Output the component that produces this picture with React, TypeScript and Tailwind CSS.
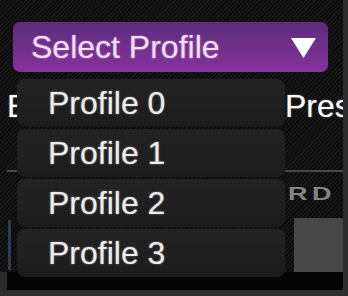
import React from "react";

const hatch =
  "bg-[repeating-linear-gradient(135deg,#181818_0px,#181818_1.5px,#0b0b0b_1.5px,#0b0b0b_3px)]";

export default function App() {
  const items = ["Profile 0", "Profile 1", "Profile 2", "Profile 3"];
  return (
    <div
      className="w-[348px] h-[296px] bg-[#2e2e2e] overflow-hidden"
      style={{ fontFamily: '"Liberation Sans", Arial, sans-serif' }}
    >
      <div
        className={`relative w-[343px] h-[290px] overflow-hidden flex flex-col ${hatch}`}
      >
        {/* header */}
        <div className="pt-[22px] pl-[13px] h-[72px] shrink-0">
          <div className="w-[315px] h-[50px] rounded-[7px] bg-linear-to-b from-[#5c2b7c] to-[#85339c] flex items-center justify-between pl-[18px] pr-[12px]">
            <span className="text-[32px] leading-[32px] text-[#f4def7] whitespace-nowrap [text-shadow:0_0_2px_rgba(255,220,255,0.5)]">
              Select Profile
            </span>
            <svg width="25" height="20" viewBox="0 0 25 20" className="mt-[2px]">
              <polygon points="0,0 25,0 12.5,20" fill="#ffffff" />
            </svg>
          </div>
        </div>

        {/* content area */}
        <div className="flex h-[200px] shrink-0">
          {/* left column */}
          <div className="w-[17px] shrink-0 flex flex-col overflow-hidden">
            <div className="mt-[18px] pl-[7px] text-[32px] leading-[32px] text-white whitespace-nowrap [text-shadow:0_0_2px_rgba(255,255,255,0.4)]">
              Bank
            </div>
            <div className="mt-[48px] ml-[7px] h-[2px] bg-[#4c4c4c]" />
            <div className="mt-[48px] ml-[8px] w-[3px] h-[50px] bg-linear-to-b from-[#3a3a3a] via-[#2a3a6a] to-[#3a3a3a]" />
          </div>
          {/* middle (covered) */}
          <div className="w-[268px] shrink-0" />
          {/* right column */}
          <div className="w-[58px] shrink-0 flex flex-col overflow-hidden">
            <div className="mt-[18px] text-[32px] leading-[32px] text-white whitespace-nowrap [text-shadow:0_0_2px_rgba(255,255,255,0.4)]">
              Preset
            </div>
            <div className="h-[48px]" />
            <div className="h-[2px] bg-[#4a4a4a]" />
            <div className="mt-[13px] pl-[3px] h-[18px] flex">
              <span className="inline-block origin-left scale-x-150 text-[18px] leading-[18px] font-bold tracking-[3px] text-[#858585]">
                RD
              </span>
            </div>
            <div className="mt-[15px] ml-[9px] w-[49px] flex-1 bg-[#474747]" />
          </div>
        </div>

        {/* bottom bar */}
        <div className="flex h-[18px] shrink-0">
          <div className="w-[7px] bg-[#2a2a2a]" />
          <div className="flex-1 bg-[#050505]" />
        </div>

        {/* dropdown overlay */}
        <div className="absolute left-[17px] top-[79px] w-[268px] flex flex-col gap-[2px]">
          {items.map((t) => (
            <div
              key={t}
              className="h-[48px] rounded-[8px] bg-linear-to-b from-[#232323] to-[#1c1c1c] flex items-center pl-[31px]"
            >
              <span className="text-[32px] leading-[32px] text-[#ececec] whitespace-nowrap [text-shadow:0_0_2px_rgba(255,255,255,0.5)]">
                {t}
              </span>
            </div>
          ))}
        </div>
      </div>
    </div>
  );
}
